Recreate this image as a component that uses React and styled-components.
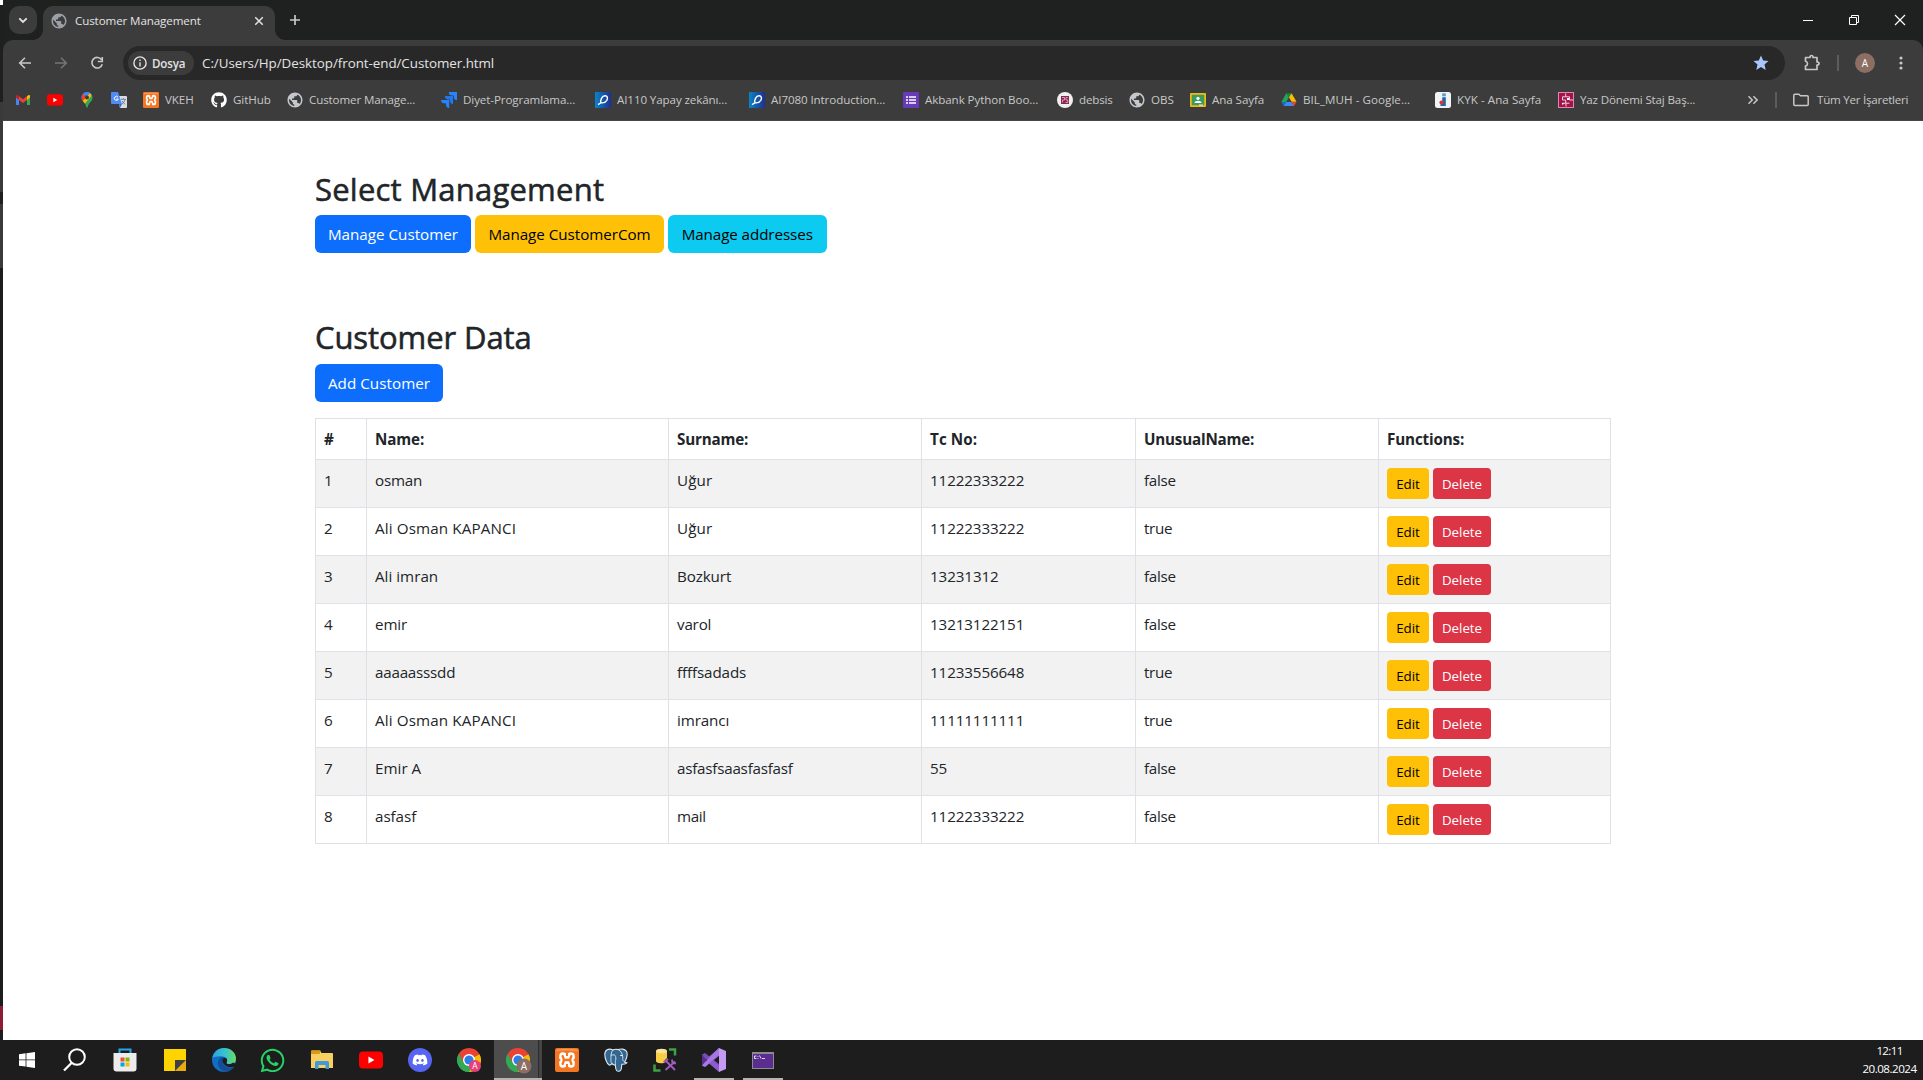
import React, { useLayoutEffect, useRef, useState } from "react";
import styled, { createGlobalStyle, css } from "styled-components";
import { FaGithub, FaWhatsapp, FaDiscord } from "react-icons/fa";
import { MdPublic } from "react-icons/md";

const GlobalStyle = createGlobalStyle`
  * { box-sizing: border-box; }
  html, body { margin: 0; padding: 0; background: #1f2020; overflow: hidden; }
  body { font-family: "Open Sans", "Noto Sans", sans-serif; }
  svg { display: block; flex: none; }
`;

/* ---------- text that tracks itself to a given width ---------- */
const Label = styled.span`
  display: inline-block;
  white-space: pre;
`;

function Fit({ w, children }) {
  const ref = useRef(null);
  const [spacing, setSpacing] = useState(0);
  useLayoutEffect(() => {
    const natural = ref.current.getBoundingClientRect().width;
    setSpacing((w - 0.8 - natural) / children.length);
  }, []);
  return (
    <Label ref={ref} style={{ letterSpacing: `${spacing}px` }}>
      {children}
    </Label>
  );
}

/* ---------- shell ---------- */
const Screen = styled.div`
  width: 1923px;
  height: 1080px;
  display: grid;
  grid-template-rows: 1040px 40px;
  overflow: hidden;
`;
const Desktop = styled.div`
  display: grid;
  grid-template-columns: 3px 1920px;
`;
const Sliver = styled.div`
  display: flex;
  flex-direction: column;
  background: #1c1c1c;
`;
const SliverPart = styled.div`
  height: ${(p) => p.$h}px;
  background: ${(p) => p.$c};
`;
const Browser = styled.div`
  display: grid;
  grid-template-rows: 40px 46px 35px 1fr;
  background: #1f2120;
`;

/* ---------- tab strip ---------- */
const TabStrip = styled.div`
  display: flex;
  padding: 6px 0 0 6px;
  color: #e3e3e3;
`;
const TabSearch = styled.div`
  width: 28px;
  height: 28px;
  border-radius: 10px;
  background: #3c3c3c;
  display: grid;
  place-items: center;
  margin-right: 6px;
`;
const Tab = styled.div`
  position: relative;
  width: 232px;
  height: 34px;
  padding: 0 10px 5px 8px;
  border-radius: 10px 10px 0 0;
  background: #3c3c3c;
  display: flex;
  align-items: center;
  font-size: 11.6px;
  &::before,
  &::after {
    content: "";
    position: absolute;
    bottom: 0;
    width: 10px;
    height: 10px;
  }
  &::before {
    left: -10px;
    background: radial-gradient(circle at 0 0, transparent 9.6px, #3c3c3c 10px);
  }
  &::after {
    right: -10px;
    background: radial-gradient(circle at 100% 0, transparent 9.6px, #3c3c3c 10px);
  }
`;
const TabTitle = styled.div`
  flex: 1;
  padding-left: 8px;
`;
const NewTab = styled.div`
  width: 40px;
  height: 28px;
  display: grid;
  place-items: center;
`;
const WindowButtons = styled.div`
  margin-left: auto;
  display: flex;
  height: 28px;
`;
const WindowButton = styled.div`
  width: 46px;
  display: grid;
  place-items: center;
`;

/* ---------- toolbar ---------- */
const Toolbar = styled.div`
  display: flex;
  align-items: center;
  background: #3c3c3c;
  border-radius: 10px 10px 0 0;
  padding: 0 16px 0 4px;
`;
const NavButton = styled.div`
  width: 36px;
  display: grid;
  place-items: center;
  padding-right: 1px;
`;
const Omnibox = styled.div`
  width: 1662px;
  height: 34px;
  margin-left: 8px;
  border-radius: 17px;
  background: #282828;
  display: flex;
  align-items: center;
  padding: 0 16px 0 5px;
  color: #e3e3e3;
  font-size: 13.4px;
`;
const FileChip = styled.div`
  width: 66px;
  height: 24px;
  border-radius: 12px;
  background: #3c3c3c;
  display: flex;
  align-items: center;
  gap: 5px;
  padding-left: 5px;
  font-size: 11.6px;
  font-weight: 600;
  margin-right: 8px;
`;
const Push = styled.div`
  margin-left: auto;
`;
const ToolbarRight = styled.div`
  flex: 1;
  display: flex;
  align-items: center;
  padding-left: 17px;
`;
const Divider = styled.div`
  width: 2px;
  height: 16px;
  background: #5c5c5c;
  margin: ${(p) => p.$m};
`;
const Avatar = styled.div`
  width: 20px;
  height: 20px;
  border-radius: 50%;
  background: #8d6e63;
  color: #fff;
  font-size: 10px;
  display: grid;
  place-items: center;
`;

/* ---------- bookmarks ---------- */
const BookmarkBar = styled.div`
  display: flex;
  align-items: center;
  background: #3c3c3c;
  border-bottom: 1px solid #464646;
  padding: 0 0 7px 12px;
  color: #c7c7c7;
  font-size: 11.6px;
`;
const Bookmark = styled.div`
  width: ${(p) => p.$w}px;
  display: flex;
  align-items: center;
  gap: 6px;
`;
const AllBookmarks = styled.div`
  margin-left: 8px;
`;

/* ---------- page ---------- */
const Page = styled.main`
  background: #fff;
  color: #212529;
  padding: 49px 312px 0;
  font-size: 15.2px;
  line-height: 24px;
`;
const Heading = styled.h2`
  margin: 0 0 ${(p) => p.$gap}px;
  font-size: 31px;
  font-weight: 400;
  line-height: 38px;
  -webkit-text-stroke: 0.55px #212529;
`;
const Section = styled.section`
  margin-bottom: ${(p) => p.$gap || 0}px;
`;
const ButtonRow = styled.div`
  display: flex;
  gap: 4px;
`;
const tones = {
  primary: css`background: #0d6efd; color: #fff;`,
  warning: css`background: #ffc107; color: #000;`,
  info: css`background: #0dcaf0; color: #000;`,
  danger: css`background: #dc3545; color: #fff;`,
};
const Button = styled.button`
  width: ${(p) => p.$w}px;
  height: 38px;
  border: 0;
  padding: 0;
  border-radius: 6px;
  font: inherit;
  ${(p) => tones[p.$tone]}
  ${(p) =>
    p.$small &&
    css`
      height: 31px;
      border-radius: 4px;
      font-size: 13.3px;
      line-height: 21px;
      padding-top: 1px;
    `}
`;
const Table = styled.table`
  width: 1295px;
  margin-top: 16px;
  border-collapse: collapse;
  table-layout: fixed;
`;
const Col = styled.col`
  width: ${(p) => p.$w}px;
`;
const Row = styled.tr`
  height: ${(p) => (p.$head ? 41 : 48)}px;
  background: ${(p) => (p.$striped ? "#f2f2f2" : "#fff")};
`;
const Cell = styled.td`
  border: 1px solid #dee2e6;
  padding: 8px 8px 0;
  text-align: left;
  vertical-align: top;
  font-weight: ${(p) => (p.$head ? 700 : 400)};
  line-height: ${(p) => (p.$actions ? 0 : "24px")};
`;

/* ---------- taskbar ---------- */
const Taskbar = styled.div`
  display: flex;
  background: #1d1d1d;
  padding-left: 3px;
  color: #fff;
`;
const Task = styled.div`
  width: ${(p) => p.$w || 49}px;
  height: 40px;
  padding-right: 2px;
  display: flex;
  align-items: center;
  justify-content: center;
  ${(p) =>
    p.$active &&
    css`
      background:
        linear-gradient(#b9b3b0, #b9b3b0) 0 38px / 48px 2px no-repeat,
        linear-gradient(90deg, #4d4d4d 0 44px, #2c2c2c 44px 45px, #444 45px 48px, transparent 48px);
    `}
  ${(p) =>
    p.$running &&
    css`
      background: linear-gradient(#b9b3b0, #b9b3b0) 4px 38px / 40px 2px no-repeat;
    `}
`;
const Clock = styled.div`
  margin-left: auto;
  width: 66px;
  padding: 2px 1px 0 0;
  display: flex;
  flex-direction: column;
  align-items: center;
  font-size: 11.6px;
  line-height: 18px;
`;

/* ---------- icons ---------- */
const Stroke = ({ s = 16, c = "#c7c7c7", w = 1.6, children }) => (
  <svg width={s} height={s} viewBox="0 0 16 16" fill="none" stroke={c} strokeWidth={w}>
    {children}
  </svg>
);
const Globe = styled(MdPublic)`
  width: 18px;
  height: 18px;
  margin: 0 -1px;
  color: ${(p) => p.$tone || "#c4c7cc"};
`;
const Gmail = () => (
  <svg width="16" height="16" viewBox="0 0 16 16">
    <path d="M1 4v9h3V6z" fill="#4285f4" />
    <path d="M15 4v9h-3V6z" fill="#34a853" />
    <path d="M12 4.200l1.500-1.100C14.300 2.600 15 3.200 15 4v1.500L12 8z" fill="#fbbc04" />
    <path d="M4 4.200L2.500 3.100C1.700 2.600 1 3.200 1 4v1.500L4 8z" fill="#c5221f" />
    <path d="M4 4.200l4 3 4-3V8l-4 3-4-3z" fill="#ea4335" />
  </svg>
);
const Youtube = ({ s = 16 }) => (
  <svg width={s} height={s} viewBox="0 0 16 16">
    <rect y="2.300" width="16" height="11.300" rx="2.600" fill="#f00" />
    <path d="M6.300 5.700v4.600L10.300 8z" fill="#fff" />
  </svg>
);
const Maps = () => (
  <svg width="16" height="16" viewBox="0 0 16 16">
    <clipPath id="pin">
      <path d="M8 0a5.500 5.500 0 0 0-5.500 5.600C2.500 9.300 6.600 10.700 7.500 15.300q.5 1 1 0C9.400 10.700 13.500 9.300 13.500 5.600A5.500 5.500 0 0 0 8 0z" />
    </clipPath>
    <g clipPath="url(#pin)">
      <rect width="16" height="16" fill="#34a853" />
      <path d="M2 9L13 0H2z" fill="#1a73e8" />
      <path d="M2 0h3l3 5-5.500 6z" fill="#ea4335" />
      <path d="M4 0h10v3L9 4 4.500 3z" fill="#4285f4" />
      <path d="M3 10l8-9 1.500 3L5 12.500z" fill="#fbbc04" />
      <path d="M6.500 12L13.500 3v12H7z" fill="#34a853" />
    </g>
    <circle cx="8" cy="5.500" r="2" fill="#3c3c3c" />
  </svg>
);
const Translate = () => (
  <svg width="16" height="16" viewBox="0 0 16 16">
    <path d="M6 4h9q1 0 1 1v10q0 1-1 1H9z" fill="#dadce0" />
    <path d="M8 12h3l-2 4z" fill="#3367d6" />
    <path d="M1 0h6l4 12H1q-1 0-1-1V1q0-1 1-1z" fill="#4f8df5" />
    <path d="M7 5.200A2 2 0 1 0 7.300 7H5.300" fill="none" stroke="#fff" strokeWidth="1" />
    <path d="M10 7.300h5M12.500 6.300v1M14 7.500c-.4 2-1.600 3.500-3 4.500M11.200 9c.6 1.300 1.700 2.500 3 3.300" fill="none" stroke="#607d8b" strokeWidth=".9" />
  </svg>
);
const Xampp = ({ s = 16 }) => (
  <svg width={s} height={s} viewBox="0 0 24 24">
    <rect width="24" height="24" rx="2" fill="#f37623" />
    <path d="M1.500 2.500Q12 .8 22.500 2.500" fill="none" stroke="#f9a468" strokeWidth="1.200" />
    <g fill="none" strokeLinecap="round" strokeLinejoin="round">
      <path d="M8 8v8M16 8v8M8 12h8" stroke="#fff" strokeWidth="7.600" />
      <path d="M7.700 8.200l1.300 3.800-1.300 3.800M16.300 8.200L15 12l1.300 3.800M9 12h6" stroke="#f37623" strokeWidth="2.400" />
    </g>
    <path d="M3.500 10.300L6 12l-2.500 1.700zM20.500 10.300L18 12l2.500 1.700zM11 4h2v4h-2zM11 16h2v4h-2z" fill="#f37623" />
  </svg>
);
const Jira = () => (
  <svg width="16" height="16" viewBox="0 0 16 16">
    <path d="M7.700 0H16v8.200a3.600 3.600 0 0 1-3.200-3.500V3.500h-1.500A3.600 3.600 0 0 1 7.700 0z" fill="#2684ff" />
    <path d="M3.800 4h8.200v8.100a3.600 3.600 0 0 1-3.200-3.500V7.400H7.300A3.600 3.600 0 0 1 3.800 4z" fill="#1f78f0" />
    <path d="M0 7.900h8.200V16A3.600 3.600 0 0 1 5 12.500v-1.200H3.500A3.600 3.600 0 0 1 0 7.900z" fill="#2684ff" />
  </svg>
);
const PCourse = ({ id }) => (
  <svg width="16" height="16" viewBox="0 0 16 16">
    <linearGradient id={id}>
      <stop offset="0" stopColor="#0a84c8" />
      <stop offset="1" stopColor="#1f2f8f" />
    </linearGradient>
    <rect width="16" height="16" fill={`url(#${id})`} />
    <path d="M3 12.600l3-1.800c-1-2.600 1-6.800 4-7 2.600-.1 3 2.500 1.800 4.500-1.200 1.900-3.300 2.900-5.800 2.500" fill="none" stroke="#fff" strokeWidth="1.400" />
  </svg>
);
const FormList = () => (
  <svg width="16" height="16" viewBox="0 0 16 16">
    <rect width="16" height="16" rx="1" fill="#673ab7" />
    <path d="M3 5h2M3 8h2M3 11h2M6 5h7M6 8h7M6 11h7" stroke="#fff" strokeWidth="1.600" />
  </svg>
);
const Debsis = () => (
  <svg width="16" height="16" viewBox="0 0 16 16">
    <circle cx="8" cy="8" r="8" fill="#f1eef0" />
    <rect x="4" y="4" width="8" height="8" fill="#8e2450" />
    <path d="M5 5.500h2.500V8H5.500v2.500M10.800 5.500H9V8h1.800v2.500H8.500" fill="none" stroke="#e7cfd9" strokeWidth=".7" />
  </svg>
);
const Classroom = () => (
  <svg width="16" height="16" viewBox="0 0 16 16">
    <rect y="1" width="16" height="14" rx="1" fill="#f5ba15" />
    <rect x="1.700" y="2.700" width="12.600" height="10.600" fill="#3d9b5b" />
    <circle cx="8" cy="6.300" r="1.600" fill="#fff" />
    <path d="M4.500 11c0-3 7-3 7 0z" fill="#fff" />
    <rect x="9" y="12.500" width="4" height="1.200" fill="#e8e8e8" />
  </svg>
);
const Drive = () => (
  <svg width="16" height="16" viewBox="0 0 16 16">
    <path d="M5.300 1.200L.5 9.700l2.300 4L8 5.300z" fill="#22a558" />
    <path d="M5.300 1.200h5.300L8 5.400z" fill="#138a45" />
    <path d="M10.600 1.200l4.900 8.500h-5L8 5.300z" fill="#fbbc04" />
    <path d="M.5 9.900h4.900L2.900 14z" fill="#1967d2" />
    <path d="M5.400 9.900h5l2.700 4.200H2.900z" fill="#4285f4" />
    <path d="M10.400 9.900h5L13.100 14z" fill="#ea4335" />
  </svg>
);
const Kyk = () => (
  <svg width="16" height="16" viewBox="0 0 16 16">
    <rect width="16" height="16" rx="2.500" fill="#f1f4f7" />
    <rect x="7.200" y="1.300" width="3.600" height="3" fill="#5f9cc6" />
    <path d="M7.200 5.300h3.600V14H5.500v-2h1.700z" fill="#1c6ca3" />
    <circle cx="6.500" cy="10.500" r="2.100" fill="#ef2b33" />
  </svg>
);
const Maze = () => (
  <svg width="16" height="16" viewBox="0 0 16 16">
    <rect width="16" height="16" fill="#d98bab" />
    <path d="M1 1h14v14H1z" fill="#a3124a" />
    <path d="M7.700 1.500v3.300H4.500V8h3.200M8 4.800h3.500V8H15M8 14.500v-3.300h3.500M4.500 11.200h3.200V8" fill="none" stroke="#f3cfdd" strokeWidth="1" />
    <path d="M4 11h1.500v1.500H4zM9 6h2v2H9z" fill="#fff" />
  </svg>
);

const Windows = () => (
  <svg width="16" height="16" viewBox="0 0 16 16" fill="#fff">
    <path d="M0 2.200l6.600-.9v6.200H0zM7.400 1.200L16 0v7.500H7.400zM0 8.300h6.600v6.300L0 13.700zM7.400 8.300H16V16l-8.600-1.200z" />
  </svg>
);
const Search = () => (
  <svg width="24" height="24" viewBox="0 0 24 24" fill="none" stroke="#fff" strokeWidth="2">
    <circle cx="14" cy="9" r="7.800" />
    <path d="M8.500 15L1 22.500" strokeWidth="2.300" />
  </svg>
);
const Store = () => (
  <svg width="24" height="24" viewBox="0 0 24 24">
    <path d="M6.500 6V1.500h11V6" fill="none" stroke="#27a7ec" strokeWidth="2" />
    <path d="M.5 5h23v15.500q0 3-3 3h-17q-3 0-3-3z" fill="#ececec" />
    <path d="M7.500 9.500h4v4h-4z" fill="#f25022" />
    <path d="M12.500 9.500h4v4h-4z" fill="#7fba00" />
    <path d="M7.500 14.500h4v4h-4z" fill="#00a4ef" />
    <path d="M12.500 14.500h4v4h-4z" fill="#ffb900" />
  </svg>
);
const Sticky = () => (
  <svg width="22" height="22" viewBox="0 0 22 22">
    <path d="M0 0h22v22H0z" fill="#fdd300" />
    <path d="M22 11L11 22h11z" fill="#e8ab12" />
    <path d="M11 11h11L11 22z" fill="#3f4044" />
  </svg>
);
const Edge = () => (
  <svg width="24" height="24" viewBox="0 0 24 24">
    <defs>
      <linearGradient id="edgeTop" x1="0" x2="1">
        <stop offset="0" stopColor="#2c9fe0" />
        <stop offset=".55" stopColor="#38c3d0" />
        <stop offset="1" stopColor="#6bdc5c" />
      </linearGradient>
    </defs>
    <circle cx="12" cy="12" r="12" fill="#0e6fc4" />
    <path d="M.3 10C1.500 4 6 0 12 0c7 0 12 5 12 10.500 0 4-3 6-6 6-2.500 0-4-1-3.500-2 1.500-2 .5-5.500-4-6C6 8 2 9 .3 10z" fill="url(#edgeTop)" />
    <path d="M9 9.500c-5 3-3.500 11 2.500 14 4.500.7 8.500-1.500 11-5-5 2.500-11 .500-11.800-4C10.400 12 11.500 10.500 12.500 10 11.500 9 10 9 9 9.500z" fill="#164c98" />
    <path d="M14.500 14.500c1.500-2 .5-4.500-2-4.800-2.500.8-2.500 4-.5 6.500 2.500 3 7 3.300 10.500 2.200l1.500 1V16l-3-1.500c-2.500 2.500-7 2-6.500 0z" fill="#1d1d1d" />
  </svg>
);
const Explorer = () => (
  <svg width="22" height="20" viewBox="0 0 22 20">
    <path d="M0 1.500Q0 .5 1 .5h8l1.500 2.500H21q1 0 1 1V18H0z" fill="#f9cf62" />
    <path d="M0 1.500Q0 .5 1 .5h8.500L8.500 4H0z" fill="#d99a14" />
    <path d="M4 19v-6.500q0-1.500 1.500-1.500h11q1.500 0 1.500 1.500V19h-3.500v-4h-7v4z" fill="#3d9ade" />
  </svg>
);
const Discord = styled.span`
  width: 24px;
  height: 24px;
  border-radius: 50%;
  background: #5865f2;
  display: grid;
  place-items: center;
`;
const Chrome = ({ badge, big }) => (
  <svg width="24" height="24" viewBox="0 0 24 24" overflow="visible">
    <path d="M12 12L1.600 6A12 12 0 0 1 22.400 6z" fill="#ea4335" />
    <path d="M12 12L22.400 6A12 12 0 0 1 12 24z" fill="#fbbc04" />
    <path d="M12 12V24A12 12 0 0 1 1.600 6z" fill="#34a853" />
    <path d="M12 6h10.400l.4 1H12zM6.800 15L1.600 6h5.800z" fill="#ea4335" />
    <path d="M6.800 15L1.600 6 1 8c-3 8 3 16 11 16l5.200-9z" fill="#34a853" />
    <circle cx="12" cy="12" r="6" fill="#fff" />
    <circle cx="12" cy="12" r="4.600" fill="#2f7de9" />
    <circle cx="18" cy="18" r={big ? 7.5 : 6} fill={badge} />
    <text x="18" y={big ? 21.5 : 21} fontSize={big ? 10 : 8.5} fill="#fff" textAnchor="middle">
      A
    </text>
  </svg>
);
const Postgres = () => (
  <svg width="24" height="24" viewBox="0 0 24 24" strokeLinejoin="round" strokeLinecap="round">
    <path
      d="M9 2C4.500 0 .8 1.800.8 6.500.8 10 3 16 5.200 17c1.200.5 2-.6 2.800-1.600.3 1 1.600 1.700 3.300 1.500.2 2.300.2 4.500 1.400 5.700 1.300 1.200 3.800.7 4.400-1.200.5-1.600.5-3.600.7-5.200 2.200.2 4.400-.2 5.200-1.500-1.200-.2-2.400 0-2.400-.6C23 10.500 24 5.500 22.300 3.200 20.600 1 16.700.5 14.500 1.600 12.500 1 10.600 1 9 2z"
      fill="#336791"
      stroke="#dfe7ee"
      strokeWidth="1.100"
    />
    <path d="M9 2C6.700 4 7 8 7 10.500S6.500 14 8 15.400M14.500 1.600c3 1.600 4 5 4.300 7.400.1 2-.9 3.200 1.800 5.100M11.300 16.900c.5-2-.3-2.900.2-4.400.6-1.600.4-4-.5-5.200-1.100-.8-2.500-.6-3.700 0" fill="none" stroke="#dfe7ee" strokeWidth=".9" />
    <path d="M16.700 7.500h1.200" stroke="#fff" strokeWidth="1" />
  </svg>
);
const SqlTool = () => (
  <svg width="24" height="24" viewBox="0 0 24 24">
    <path d="M3 3v10c0 3 11 3 11 0V3z" fill="#f6cf45" />
    <ellipse cx="8.500" cy="3" rx="5.500" ry="2.300" fill="#fbe39a" />
    <path d="M16 1.500h6v6M1.500 16.500v6h6" fill="none" stroke="#3fa045" strokeWidth="2.500" />
    <path d="M12 12l10 9.500M21.500 12L12 22" stroke="#1d1d1d" strokeWidth="4.500" />
    <path d="M11 14.500l4-3.500M13 13l9 9M22 13.500L12.500 22M19 11.500l.5 3.500 3.500.3" fill="none" stroke="#a25ac4" strokeWidth="1.900" />
  </svg>
);
const VisualStudio = () => (
  <svg width="24" height="24" viewBox="0 0 24 24">
    <path d="M0 6.500L3 5l14 11v7.500L4 11.500v2L1.500 18 0 17.500z" fill="#7a4bb8" />
    <path d="M3 19L0 17.500 17 .3l1 6.700z" fill="#a374dc" />
    <path d="M17 0l7 3v18l-7 3z" fill="#c49af2" />
    <path d="M17 6.500L10 12l7 5.500V24L6 14.500V9.500L17 0z" fill="#8e5bd0" />
    <path d="M17 6.500L3 18.800 0 17.500 17 0z" fill="#a678e2" />
    <path d="M0 6.500v11l4.500-5.500z" fill="#55308c" />
  </svg>
);
const Terminal = () => (
  <svg width="22" height="17" viewBox="0 0 22 17">
    <rect width="22" height="17" fill="#8b8b8b" />
    <rect x="1" y="2" width="20" height="14" fill="#5c2d91" />
    <path d="M4.500 4H2.500v2.500h2M6 4v.8M6 6v.8M7.500 3.500l1.500 3M10 6.500h3" fill="none" stroke="#fff" strokeWidth=".8" />
  </svg>
);

/* ---------- data ---------- */
const bookmarks = [
  [Gmail, 32],
  [Youtube, 32],
  [Maps, 32],
  [Translate, 32],
  [Xampp, 68, "VKEH", 29.5],
  [() => <FaGithub size={16} color="#fff" />, 76, "GitHub", 38.5],
  [Globe, 154, "Customer Manage...", 107],
  [Jira, 154, "Diyet-Programlama...", 113],
  [() => <PCourse id="c1" />, 154, "AI110 Yapay zekânı...", 111],
  [() => <PCourse id="c2" />, 154, "AI7080 Introduction...", 115],
  [FormList, 154, "Akbank Python Boo...", 114],
  [Debsis, 72, "debsis", 34.5],
  [Globe, 61, "OBS", 23.5],
  [Classroom, 91, "Ana Sayfa", 53],
  [Drive, 154, "BIL_MUH - Google...", 108],
  [Kyk, 123, "KYK - Ana Sayfa", 85],
  [Maze, 189, "Yaz Dönemi Staj Baş...", 116],
];

const columns = [
  [51, "#", 9],
  [302, "Name:", 50],
  [253, "Surname:", 72],
  [214, "Tc No:", 48],
  [243, "UnusualName:", 111],
  [232, "Functions:", 78],
];

const customers = [
  ["osman", 48, "Uğur", 36, "11222333222", 95, "false"],
  ["Ali Osman KAPANCI", 142, "Uğur", 36, "11222333222", 95, "true"],
  ["Ali imran", 64, "Bozkurt", 55, "13231312", 69.5, "false"],
  ["emir", 33, "varol", 35, "13213122151", 95, "false"],
  ["aaaaasssdd", 81, "ffffsadads", 70, "11233556648", 95, "true"],
  ["Ali Osman KAPANCI", 142, "imrancı", 53, "11111111111", 95, "true"],
  ["Emir A", 47, "asfasfsaasfasfasf", 116.5, "55", 17.8, "false"],
  ["asfasf", 42, "mail", 29.5, "11222333222", 95, "false"],
];

const tasks = [
  { icon: <Windows />, w: 49 },
  { icon: <Search />, w: 48 },
  { icon: <Store />, w: 51 },
  { icon: <Sticky /> },
  { icon: <Edge /> },
  { icon: <FaWhatsapp size={27} color="#25d366" /> },
  { icon: <Explorer /> },
  { icon: <Youtube s={24} /> },
  { icon: <Discord><FaDiscord size={16} color="#fff" /></Discord> },
  { icon: <Chrome badge="#e83e7c" /> },
  { icon: <Chrome badge="#8d6e63" big />, active: true },
  { icon: <Xampp s={24} /> },
  { icon: <Postgres /> },
  { icon: <SqlTool /> },
  { icon: <VisualStudio />, running: true },
  { icon: <Terminal />, running: true },
];

const sliver = [
  [5, "#fff"],
  [97, "#1f1f1f"],
  [90, "#3a3a3a"],
  [12, "#1f1f1f"],
  [64, "#3a3a3a"],
  [738, "#1c1c1c"],
  [24, "#8c1c34"],
];

export default function App() {
  return (
    <Screen>
      <GlobalStyle />
      <Desktop>
        <Sliver>
          {sliver.map(([h, c], i) => (
            <SliverPart key={i} $h={h} $c={c} />
          ))}
        </Sliver>
        <Browser>
          <TabStrip>
            <TabSearch>
              <Stroke s={16} c="#e3e3e3" w={1.8}>
                <path d="M4.300 6.300L8 10l3.700-3.700" />
              </Stroke>
            </TabSearch>
            <Tab>
              <Globe $tone="#9aa0a6" />
              <TabTitle>
                <Fit w={126.5}>Customer Management</Fit>
              </TabTitle>
              <Stroke s={12} c="#e3e3e3" w={2}>
                <path d="M3 3l10 10M13 3L3 13" />
              </Stroke>
            </Tab>
            <NewTab>
              <Stroke s={16} c="#c7c7c7" w={1.7}>
                <path d="M8 3v10M3 8h10" />
              </Stroke>
            </NewTab>
            <WindowButtons>
              <WindowButton>
                <Stroke s={16} c="#fff" w={1}>
                  <path d="M3 8.500h10" />
                </Stroke>
              </WindowButton>
              <WindowButton>
                <Stroke s={16} c="#fff" w={1}>
                  <path d="M3.500 5.500h7v7h-7zM5.500 5.500v-2h7v7h-2" />
                </Stroke>
              </WindowButton>
              <WindowButton>
                <Stroke s={16} c="#fff" w={1.2}>
                  <path d="M3 3l10 10M13 3L3 13" />
                </Stroke>
              </WindowButton>
            </WindowButtons>
          </TabStrip>
          <Toolbar>
            <NavButton>
              <Stroke c="#c7c7c7">
                <path d="M14 8H3M8 2.700L2.700 8 8 13.300" />
              </Stroke>
            </NavButton>
            <NavButton>
              <Stroke c="#757575">
                <path d="M2 8h11M8 2.700L13.300 8 8 13.300" />
              </Stroke>
            </NavButton>
            <NavButton>
              <Stroke c="#c7c7c7">
                <path d="M12.600 4.700A5.300 5.300 0 1 0 13.300 9.300M13.300 2v4.500H8.800" />
              </Stroke>
            </NavButton>
            <Omnibox>
              <FileChip>
                <Stroke s={14} c="#e3e3e3" w={1.6}>
                  <circle cx="8" cy="8" r="7" />
                  <path d="M8 7v5M8 4v1.700" />
                </Stroke>
                <Fit w={34}>Dosya</Fit>
              </FileChip>
              <Fit w={293}>C:/Users/Hp/Desktop/front-end/Customer.html</Fit>
              <Push>
                <svg width="16" height="16" viewBox="0 0 16 16">
                  <path d="M8 .6l2.200 4.900 5.300.5-4 3.600 1.200 5.300L8 12.100l-4.700 2.800 1.200-5.300-4-3.600 5.300-.5z" fill="#a8c7fa" />
                </svg>
              </Push>
            </Omnibox>
            <ToolbarRight>
              <svg width="20" height="20" viewBox="0 0 20 20" fill="none" stroke="#c7c7c7" strokeWidth="1.700">
                <path d="M3.500 4.500H8q0-2 1.500-2t1.500 2h4V9q2 0 2 1.500T15 12v4.500H3.500V13q2-.5 2-2.300T3.500 8.300z" strokeLinejoin="round" />
              </svg>
              <Divider $m="0 16px 0 15px" />
              <Avatar>A</Avatar>
              <Push>
                <svg width="16" height="16" viewBox="0 0 16 16" fill="#c7c7c7">
                  <circle cx="10" cy="3" r="1.600" />
                  <circle cx="10" cy="8" r="1.600" />
                  <circle cx="10" cy="13" r="1.600" />
                </svg>
              </Push>
            </ToolbarRight>
          </Toolbar>
          <BookmarkBar>
            {bookmarks.map(([Icon, w, text, tw], i) => (
              <Bookmark key={i} $w={w}>
                <Icon />
                {text && <Fit w={tw}>{text}</Fit>}
              </Bookmark>
            ))}
            <Stroke s={12} c="#c7c7c7" w={2}>
              <path d="M2 3l5 5-5 5M8.500 3l5 5-5 5" />
            </Stroke>
            <Divider $m="0 16px" />
            <Stroke s={16} c="#c7c7c7" w={1.5}>
              <path d="M.8 3.200q0-1 1-1h4l1.700 1.600h6.700q1 0 1 1v7.700q0 1-1 1H1.800q-1 0-1-1z" />
            </Stroke>
            <AllBookmarks>
              <Fit w={92}>Tüm Yer İşaretleri</Fit>
            </AllBookmarks>
          </BookmarkBar>
          <Page>
            <Section $gap={65}>
              <Heading $gap={7}>
                <Fit w={290}>Select Management</Fit>
              </Heading>
              <ButtonRow>
                <Button $tone="primary" $w={156}>
                  <Fit w={131}>Manage Customer</Fit>
                </Button>
                <Button $tone="warning" $w={189}>
                  <Fit w={163}>Manage CustomerCom</Fit>
                </Button>
                <Button $tone="info" $w={158.5}>
                  <Fit w={132}>Manage addresses</Fit>
                </Button>
              </ButtonRow>
            </Section>
            <Section>
              <Heading $gap={8}>
                <Fit w={217.5}>Customer Data</Fit>
              </Heading>
              <Button $tone="primary" $w={128}>
                <Fit w={103}>Add Customer</Fit>
              </Button>
              <Table>
                <colgroup>
                  {columns.map(([w]) => (
                    <Col key={w} $w={w} />
                  ))}
                </colgroup>
                <thead>
                  <Row $head>
                    {columns.map(([, name, w]) => (
                      <Cell as="th" $head key={name}>
                        <Fit w={w}>{name}</Fit>
                      </Cell>
                    ))}
                  </Row>
                </thead>
                <tbody>
                  {customers.map(([name, nw, surname, sw, tc, tw, unusual], i) => (
                    <Row key={i} $striped={i % 2 === 0}>
                      <Cell>{i + 1}</Cell>
                      <Cell><Fit w={nw}>{name}</Fit></Cell>
                      <Cell><Fit w={sw}>{surname}</Fit></Cell>
                      <Cell><Fit w={tw}>{tc}</Fit></Cell>
                      <Cell><Fit w={unusual === "true" ? 29 : 32.5}>{unusual}</Fit></Cell>
                      <Cell $actions>
                        <ButtonRow>
                          <Button $small $tone="warning" $w={42}>
                            <Fit w={24.5}>Edit</Fit>
                          </Button>
                          <Button $small $tone="danger" $w={58}>
                            <Fit w={41}>Delete</Fit>
                          </Button>
                        </ButtonRow>
                      </Cell>
                    </Row>
                  ))}
                </tbody>
              </Table>
            </Section>
          </Page>
        </Browser>
      </Desktop>
      <Taskbar>
        {tasks.map(({ icon, active, running, w }, i) => (
          <Task key={i} $active={active} $running={running} $w={w}>
            {icon}
          </Task>
        ))}
        <Clock>
          <Fit w={27}>12:11</Fit>
          <Fit w={55}>20.08.2024</Fit>
        </Clock>
      </Taskbar>
    </Screen>
  );
}
